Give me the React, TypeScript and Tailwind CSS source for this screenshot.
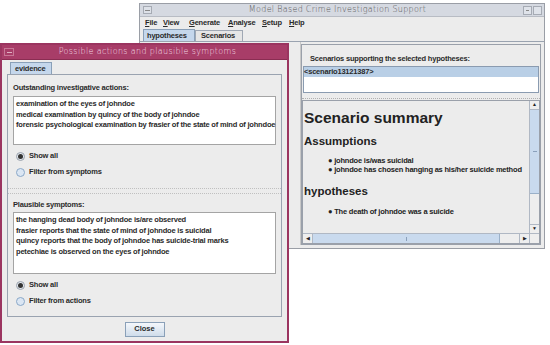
import React from "react";

const ff = { fontFamily: '"Liberation Sans", Arial, sans-serif' };
const tf = { fontFamily: '"DejaVu Sans", "Liberation Sans", sans-serif' };

function Radio({ checked, label }: { checked: boolean; label: string }) {
  return (
    <div className="flex items-center gap-[4px] h-[16px]">
      <div
        className={
          "w-[9px] h-[9px] rounded-full border flex items-center justify-center " +
          (checked ? "border-[#9aa3ad] bg-[#e4e8ee]" : "border-[#8aa8c8] bg-[#dbe6f3]")
        }
      >
        {checked && <div className="w-[5px] h-[5px] rounded-full bg-[#333]" />}
      </div>
      <span className="text-[7.5px] font-bold text-[#2a2a2a] tracking-[-0.2px]">{label}</span>
    </div>
  );
}

function TextArea({ lines, h }: { lines: string[]; h: string }) {
  return (
    <div className={"bg-white border border-[#a4a4a4] px-[2px] pt-[2px] " + h}>
      {lines.map((l) => (
        <div key={l} className="text-[7.5px] font-bold text-[#2a2a2a] leading-[10.5px] tracking-[-0.2px] whitespace-nowrap">
          {l}
        </div>
      ))}
    </div>
  );
}

export default function App() {
  return (
    <div className="relative w-[550px] h-[345px] bg-white overflow-hidden" style={ff}>
      {/* Back window */}
      <div className="absolute left-[139px] top-[3px] w-[406px] h-[246px] border border-[#9a9ea6] bg-[#ececec] flex flex-col">
        <div className="h-[13px] bg-[#d5d9e1] border-b border-[#b8bcc4] flex items-center relative">
          <div className="ml-[3px] w-[9px] h-[8px] border border-[#a6abb4] bg-[#dde1e8] flex items-center justify-center">
            <div className="w-[5px] h-px bg-[#888]" />
          </div>
          <div className="flex-1 text-center text-[8px] text-[#555] tracking-[0.3px] font-extralight" style={tf}>
            Model Based Crime Investigation Support
          </div>
          <div className="flex gap-[1px] mr-[2px]">
            <div className="w-[9px] h-[9px] border border-[#a6abb4] bg-[#dfe3ea] flex items-center justify-center">
              <div className="w-[3px] h-px bg-[#888]" />
            </div>
            <div className="w-[9px] h-[9px] border border-[#a6abb4] bg-[#dfe3ea]" />
          </div>
        </div>
        <div className="h-[12px] flex items-center text-[7.5px] font-bold text-[#2a2a2a] tracking-[-0.2px]">
          <span className="ml-[5px] w-[18px]"><u>F</u>ile</span>
          <span className="w-[26px]"><u>V</u>iew</span>
          <span className="w-[39px]"><u>G</u>enerate</span>
          <span className="w-[34px]"><u>A</u>nalyse</span>
          <span className="w-[27px]"><u>S</u>etup</span>
          <span><u>H</u>elp</span>
        </div>
        <div className="h-[13px] flex items-end pl-[3px] border-b border-[#9aa3b0]">
          <div className="h-[12px] w-[52px] bg-[#c5d7ec] border border-b-0 border-[#8aa0b8] text-[7.5px] font-bold text-[#2a2a2a] flex items-center pl-[3px] tracking-[-0.2px]">
            hypotheses
          </div>
          <div className="h-[11px] w-[48px] bg-[#e6e6e6] border border-b-0 border-[#a0a8b4] text-[7.5px] font-bold text-[#2a2a2a] flex items-center pl-[5px] tracking-[-0.2px]">
            Scenarios
          </div>
        </div>
        <div className="flex-1 flex min-h-0 pb-[3px]">
          <div className="w-[155px]" />
          <div className="w-[6px] border-r border-[#c8c8c8]" />
          <div className="flex-1 mr-[3px] mt-[2px] border border-[#9aa0aa] flex flex-col bg-[#ececec]">
            <div className="h-[21px] flex items-end pl-[8px] pb-[2px] text-[7.5px] font-bold text-[#2a2a2a] tracking-[-0.2px]">
              Scenarios supporting the selected hypotheses:
            </div>
            <div className="h-[27px] bg-white border border-[#8a9bb0] mx-px">
              <div className="h-[10px] bg-[#b9cfe6] text-[7.5px] font-bold text-[#2a2a2a] flex items-center tracking-[-0.2px]">
                &lt;scenario13121387&gt;
              </div>
            </div>
            <div className="h-[6px] border-b border-dotted border-[#b0b0b0] mb-[1px]" />
            <div className="flex-1 flex flex-col border border-[#9aa0aa] min-h-0">
              <div className="flex-1 flex min-h-0">
                <div className="flex-1 overflow-hidden pl-[1px] text-[#222]">
                  <div className="text-[15.5px] font-bold mt-[7px] leading-[20px]">Scenario summary</div>
                  <div className="text-[11.5px] font-bold mt-[6px] leading-[14px]">Assumptions</div>
                  <div className="mt-[9px] pl-[24px] text-[7.5px] font-bold leading-[8.5px] tracking-[-0.2px]">
                    <div>● johndoe is/was suicidal</div>
                    <div>● johndoe has chosen hanging as his/her suicide method</div>
                  </div>
                  <div className="text-[11.5px] font-bold mt-[10px] leading-[14px]">hypotheses</div>
                  <div className="mt-[10px] pl-[24px] text-[7.5px] font-bold leading-[8.5px] tracking-[-0.2px]">
                    <div>● The death of johndoe was a suicide</div>
                  </div>
                </div>
                <div className="w-[10px] flex flex-col border-l border-[#b0b8c4] bg-[#eeeeee]">
                  <div className="h-[9px] flex items-center justify-center text-[5px] text-[#222] border-b border-[#b0b8c4]">▲</div>
                  <div className="h-[84px] bg-[#c9daee] border-b border-[#9ab0c8] flex items-center justify-center">
                    <div className="w-[4px] h-px bg-[#8aa0bb]" />
                  </div>
                  <div className="flex-1" />
                  <div className="h-[9px] flex items-center justify-center text-[5px] text-[#222] border-t border-[#b0b8c4]">▼</div>
                </div>
              </div>
              <div className="h-[10px] flex border-t border-[#b0b8c4] bg-[#eeeeee]">
                <div className="w-[10px] flex items-center justify-center text-[5px] text-[#222] border-r border-[#b0b8c4]">◀</div>
                <div className="w-[187px] bg-[#c9daee] border-r border-[#9ab0c8] flex items-center justify-center">
                  <div className="w-px h-[4px] bg-[#8aa0bb]" />
                </div>
                <div className="flex-1" />
                <div className="w-[10px] flex items-center justify-center text-[5px] text-[#222] border-l border-[#b0b8c4]">▶</div>
                <div className="w-[10px] border-l border-[#b0b8c4]" />
              </div>
            </div>
          </div>
        </div>
      </div>

      {/* Front dialog */}
      <div className="absolute left-0 top-[43px] w-[289px] h-[300px] border-[2px] border-[#9b3560] bg-[#ececec] flex flex-col">
        <div className="h-[15px] bg-[#a83d68] flex items-center border-b border-[#8a2d52]">
          <div className="ml-[2px] w-[10px] h-[8px] border border-[#c77796] flex items-center justify-center">
            <div className="w-[5px] h-px bg-[#e0b0c4]" />
          </div>
          <div className="flex-1 text-center text-[8px] text-[#f3dbe5] tracking-[0.35px] font-extralight pr-[6px]" style={tf}>
            Possible actions and plausible symptoms
          </div>
        </div>
        <div className="h-[14px] flex items-end pl-[8px]">
          <div className="h-[12px] w-[42px] bg-[#c5d7ec] border border-b-0 border-[#8aa0b8] text-[7.5px] font-bold text-[#2a2a2a] flex items-center pl-[4px] tracking-[-0.2px]">
            evidence
          </div>
        </div>
        <div className="mx-[5px] h-[243px] border border-[#9aa3b0] flex flex-col">
          <div className="px-[5px]">
            <div className="h-[21px] flex items-end pb-[3px] text-[7.5px] font-bold text-[#2a2a2a] tracking-[-0.2px]">
              Outstanding investigative actions:
            </div>
            <TextArea
              h="h-[49px]"
              lines={[
                "examination of the eyes of johndoe",
                "medical examination by quincy of the body of johndoe",
                "forensic psychological examination by frasier of the state of mind of johndoe",
              ]}
            />
            <div className="mt-[3px] pl-[3px]">
              <Radio checked label="Show all" />
              <Radio checked={false} label="Filter from symptoms" />
            </div>
          </div>
          <div className="mt-[8px] h-[6px] border-y border-dotted border-[#c0c0c0]" />
          <div className="px-[5px]">
            <div className="h-[18px] flex items-end pb-[2px] text-[7.5px] font-bold text-[#2a2a2a] tracking-[-0.2px]">
              Plausible symptoms:
            </div>
            <TextArea
              h="h-[62px]"
              lines={[
                "the hanging dead body of johndoe is/are observed",
                "frasier reports that the state of mind of johndoe is suicidal",
                "quincy reports that the body of johndoe has suicide-trial marks",
                "petechiae is observed on the eyes of johndoe",
              ]}
            />
            <div className="mt-[3px] pl-[3px]">
              <Radio checked label="Show all" />
              <Radio checked={false} label="Filter from actions" />
            </div>
          </div>
        </div>
        <div className="flex-1 flex items-center justify-center">
          <div className="w-[40px] h-[15px] border border-[#8aa0b8] bg-gradient-to-b from-[#f4f7fb] to-[#cfdcea] text-[7.5px] font-bold text-[#2a2a2a] flex items-center justify-center">
            Close
          </div>
        </div>
      </div>
    </div>
  );
}
